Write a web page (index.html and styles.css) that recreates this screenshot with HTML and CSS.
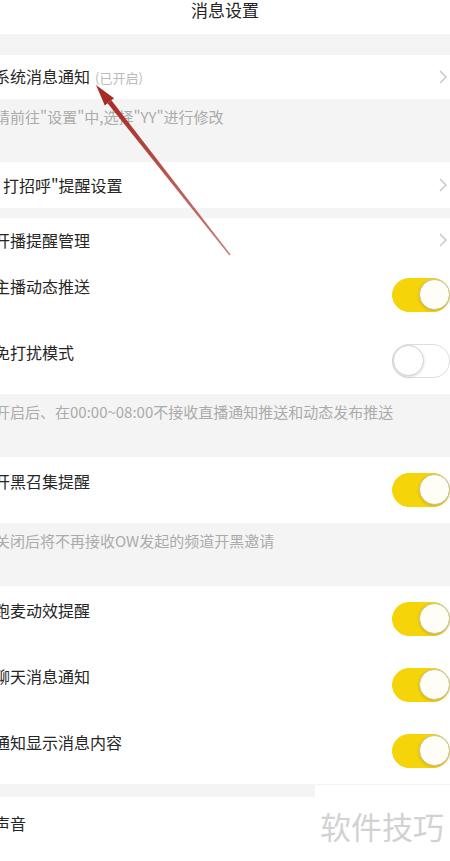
FILE: index.html
```html
<!DOCTYPE html>
<html lang="zh-CN">
<head>
    <meta charset="UTF-8">
    <meta name="viewport" content="width=device-width, initial-scale=1.0">
    <title>消息设置</title>
    <link rel="stylesheet" href="styles.css">
</head>
<body>
    <div class="page">
        <!-- Top bar -->
        <header class="topbar">
            <h1 class="title">消息设置</h1>
        </header>

        <div class="gap gap-top"></div>

        <div class="row row-link">
            <span class="label">系统消息通知<span class="state">(已开启)</span></span>
            <svg class="chevron" viewBox="0 0 8 14"><polyline points="1,1 7,7 1,13"/></svg>
        </div>
        <p class="hint">请前往"设置"中,选择"YY"进行修改</p>

        <div class="row row-link row-greet">
            <span class="label label-q">打招呼"提醒设置</span>
            <svg class="chevron" viewBox="0 0 8 14"><polyline points="1,1 7,7 1,13"/></svg>
        </div>

        <div class="gap gap-small"></div>

        <div class="group">
            <div class="row row-link">
                <span class="label">开播提醒管理</span>
                <svg class="chevron" viewBox="0 0 8 14"><polyline points="1,1 7,7 1,13"/></svg>
            </div>
            <div class="row row-switch">
                <span class="label">主播动态推送</span>
                <span class="switch on"></span>
            </div>
            <div class="row row-switch">
                <span class="label">免打扰模式</span>
                <span class="switch"></span>
            </div>
        </div>
        <p class="hint">开启后、在00:00~08:00不接收直播通知推送和动态发布推送</p>

        <div class="row row-switch">
            <span class="label">开黑召集提醒</span>
            <span class="switch on"></span>
        </div>
        <p class="hint">关闭后将不再接收OW发起的频道开黑邀请</p>

        <div class="group">
            <div class="row row-switch">
                <span class="label">跑麦动效提醒</span>
                <span class="switch on"></span>
            </div>
            <div class="row row-switch">
                <span class="label">聊天消息通知</span>
                <span class="switch on"></span>
            </div>
            <div class="row row-switch">
                <span class="label">通知显示消息内容</span>
                <span class="switch on"></span>
            </div>
        </div>

        <div class="gap gap-bottom"></div>

        <div class="row row-last">
            <span class="label">声音</span>
        </div>

        <!-- annotation arrow drawn over the screenshot -->
        <svg class="arrow" viewBox="0 0 450 861">
            <defs>
                <linearGradient id="shaft" x1="110" y1="101" x2="230" y2="255" gradientUnits="userSpaceOnUse">
                    <stop offset="0" stop-color="#a82c26"/>
                    <stop offset="1" stop-color="#a82c26" stop-opacity="0.6"/>
                </linearGradient>
            </defs>
            <polygon fill="url(#shaft)" points="107.6,103.3 111.4,100.2 230.6,254.5 229.4,255.5"/>
            <polygon fill="#a82c26" points="96,85 104.8,105.6 114,98.3"/>
        </svg>

        <div class="watermark">软件技巧</div>
    </div>
</body>
</html>
```

FILE: styles.css
```css
body {
    margin: 0;
    background: #f4f4f4;
    font-family: "Noto Sans CJK SC", "Noto Sans", sans-serif;
    color: #262626;
    overflow: hidden;
}

.page {
    position: relative;
    width: 450px;
    height: 861px;
    overflow: hidden;
}

.topbar {
    height: 34px;
    background: #fff;
}

.title {
    margin: 0;
    text-align: center;
    font-size: 17px;
    font-weight: normal;
    line-height: 20px;
    color: #222;
}

.gap-top {
    height: 21px;
}

.gap-small {
    height: 10px;
}

.gap-bottom {
    height: 13px;
}

.group {
    background: #fff;
}

.row {
    display: flex;
    justify-content: space-between;
    background: #fff;
    font-size: 16px;
    line-height: 20px;
}

.label {
    margin-left: -6px;
    white-space: nowrap;
}

.label-q {
    margin-left: 3px;
}

.state {
    margin-left: 5px;
    font-size: 13px;
    color: #bbb;
}

/* rows that open another page */
.row-link {
    height: 44px;
    align-items: center;
}

.row-greet {
    height: 46px;
}

.chevron {
    width: 8px;
    height: 14px;
    margin-right: 3px;
    fill: none;
    stroke: #c8c8c8;
    stroke-width: 1.5;
}

/* rows with a switch */
.row-switch {
    height: 66px;
    align-items: flex-start;
}

.row-switch .label {
    padding-top: 14px;
}

.switch {
    position: relative;
    box-sizing: border-box;
    width: 58px;
    height: 34px;
    margin-top: 16px;
    border-radius: 17px;
    border: 1.5px solid #dedede;
    background: #fff;
}

.switch::after {
    content: "";
    position: absolute;
    top: 0;
    left: 0;
    box-sizing: border-box;
    width: 31px;
    height: 31px;
    border-radius: 50%;
    background: #fff;
    border: 1px solid #d4d4d4;
    box-shadow: 0 1px 3px rgba(0, 0, 0, 0.15);
}

.switch.on {
    border-color: #f5d40a;
    background: #f5d40a;
}

.switch.on::after {
    left: auto;
    right: -1px;
    border-color: #c9c2a0;
    background: #fefef6;
}

.hint {
    box-sizing: border-box;
    height: 63px;
    margin: 0;
    padding: 8px 0 0 0;
    text-indent: -5px;
    font-size: 15px;
    line-height: 20px;
    color: #ababab;
    white-space: nowrap;
}

.row-last {
    height: 64px;
    padding-top: 16px;
}

.arrow {
    position: absolute;
    top: 0;
    left: 0;
    width: 450px;
    height: 861px;
    pointer-events: none;
}

.watermark {
    position: absolute;
    left: 315px;
    top: 785px;
    width: 135px;
    height: 76px;
    padding: 23px 0 0 5px;
    box-sizing: border-box;
    background: #fff;
    font-size: 31px;
    line-height: 36px;
    color: #d2d2d2;
}
```
